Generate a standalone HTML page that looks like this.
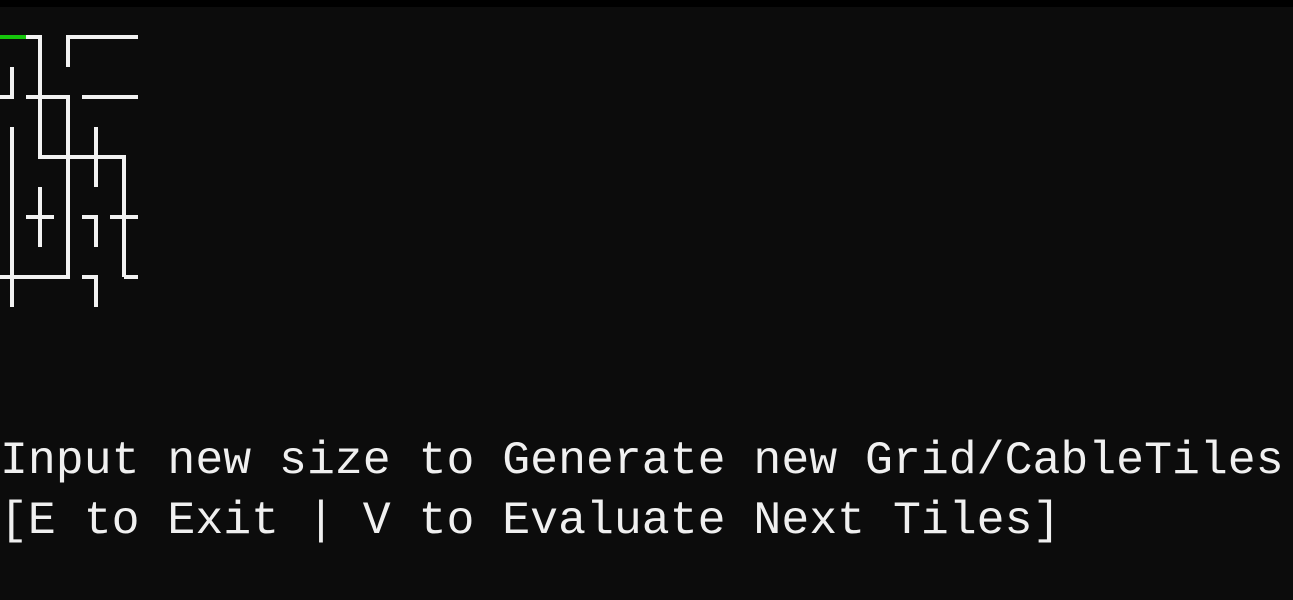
<!DOCTYPE html>
<html><head><meta charset="utf-8"><style>
html,body{margin:0;padding:0;width:1293px;height:600px;overflow:hidden;background:#0c0c0c}
.top{position:absolute;left:0;top:0;width:1293px;height:7px;background:#000}
svg{position:absolute;left:0;top:0}
.t{position:absolute;left:0;top:431px;font-family:"Liberation Mono",monospace;font-size:46.5px;line-height:60px;color:#f0f0f0;white-space:pre}
</style></head><body>
<div class="top"></div>
<svg width="1293" height="600" stroke="#f2f2f2" stroke-width="4" stroke-linecap="butt" fill="none">
<line x1="0" y1="37" x2="26" y2="37" stroke="#16c60c"/>
<polyline points="26,37 40,37 40,157"/>
<polyline points="138,37 68,37 68,67"/>
<polyline points="0,97 12,97 12,67"/>
<line x1="26" y1="97" x2="70" y2="97"/>
<line x1="68" y1="97" x2="68" y2="277"/>
<line x1="82" y1="97" x2="138" y2="97"/>
<line x1="38" y1="157" x2="126" y2="157"/>
<line x1="124" y1="157" x2="124" y2="277"/>
<line x1="96" y1="127" x2="96" y2="187"/>
<line x1="12" y1="127" x2="12" y2="307"/>
<line x1="26" y1="217" x2="54" y2="217"/>
<line x1="40" y1="187" x2="40" y2="247"/>
<polyline points="82,217 96,217 96,247"/>
<line x1="110" y1="217" x2="138" y2="217"/>
<line x1="0" y1="277" x2="70" y2="277"/>
<polyline points="82,277 96,277 96,307"/>
<line x1="124" y1="277" x2="138" y2="277"/>
</svg>
<div class="t">Input new size to Generate new Grid/CableTiles
[E to Exit | V to Evaluate Next Tiles]</div>
</body></html>
